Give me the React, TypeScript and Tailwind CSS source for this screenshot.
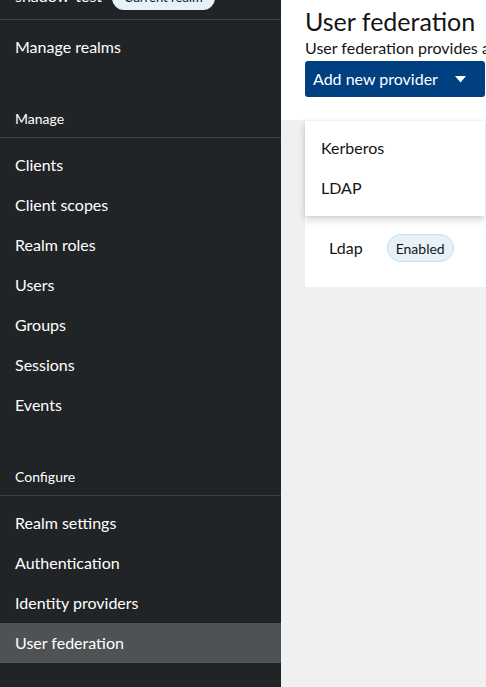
const manageItems = ['Clients', 'Client scopes', 'Realm roles', 'Users', 'Groups', 'Sessions', 'Events'];
const configureItems = ['Realm settings', 'Authentication', 'Identity providers', 'User federation'];

function NavItem({ label, active }: { label: string; active?: boolean }) {
  return (
    <div
      className={`h-10 flex items-center px-[15px] text-[16px] text-white ${active ? 'bg-[#4f5255]' : ''}`}
    >
      {label}
    </div>
  );
}

function SectionTitle({ label }: { label: string }) {
  return (
    <div className="mt-[33px] h-[38px] flex items-center px-[15px] text-[14px] text-white border-b border-[#3c3f42]">
      {label}
    </div>
  );
}

export default function App() {
  return (
    <div
      className="flex w-[486px] h-[687px] overflow-hidden"
      style={{ fontFamily: 'Lato, "Open Sans", sans-serif' }}
    >
      <nav className="w-[281px] shrink-0 bg-[#212427] flex flex-col">
        <div className="h-[20px] border-b border-[#3c3f42] flex items-end pb-[9px] px-[15px]">
          <div className="flex items-end gap-[10px]">
            <span className="text-[16px] text-white leading-none mb-[6px]">shadow-test</span>
            <span className="h-6 px-3 rounded-full bg-[#e7f1fa] text-[#151515] text-[13px] flex items-center">
              Current realm
            </span>
          </div>
        </div>
        <div className="mt-[7px]">
          <NavItem label="Manage realms" />
        </div>

        <SectionTitle label="Manage" />
        <div className="mt-[7px]">
          {manageItems.map((item) => (
            <NavItem key={item} label={item} />
          ))}
        </div>

        <SectionTitle label="Configure" />
        <div className="mt-[7px]">
          {configureItems.map((item) => (
            <NavItem key={item} label={item} active={item === 'User federation'} />
          ))}
        </div>
      </nav>

      <main className="relative flex-1 bg-[#f0f0f0] overflow-hidden">
        <div className="bg-white pl-6 pt-[6px] pb-[23px]">
          <h1 className="text-[25px] leading-[30px] text-[#151515] whitespace-nowrap">User federation</h1>
          <p className="mt-[1px] text-[16px] leading-[21px] text-[#151515] whitespace-nowrap">
            User federation provides access to external databases and directories, such as LDAP and Active Directory.
          </p>
          <button className="mt-[3px] w-[180px] h-9 rounded-[3px] bg-[#004080] text-white text-[16px] flex items-center pl-2 pr-[19px] justify-between">
            <span>Add new provider</span>
            <svg width="11" height="7" viewBox="0 0 11 7" fill="currentColor">
              <path d="M0 0h11L5.5 6.5z" />
            </svg>
          </button>
        </div>

        <div className="pl-6">
          <div className="bg-white h-[167px] pt-[100px] pl-6">
            <div className="flex items-center gap-6 h-14">
              <span className="text-[16px] text-[#151515]">Ldap</span>
              <span className="h-7 px-2 rounded-full bg-[#e7f1fa] border border-[#bee1f4] text-[#151515] text-[14px] flex items-center">
                Enabled
              </span>
            </div>
          </div>
        </div>

        <div className="absolute left-6 top-[121px] w-[180px] bg-white pt-[7px] pb-[8px] shadow-[0_4px_8px_0_rgba(3,3,3,0.16),0_0_4px_0_rgba(3,3,3,0.08)]">
          <div className="h-10 flex items-center px-4 text-[16px] text-[#151515]">Kerberos</div>
          <div className="h-10 flex items-center px-4 text-[16px] text-[#151515]">LDAP</div>
        </div>
      </main>
    </div>
  );
}
